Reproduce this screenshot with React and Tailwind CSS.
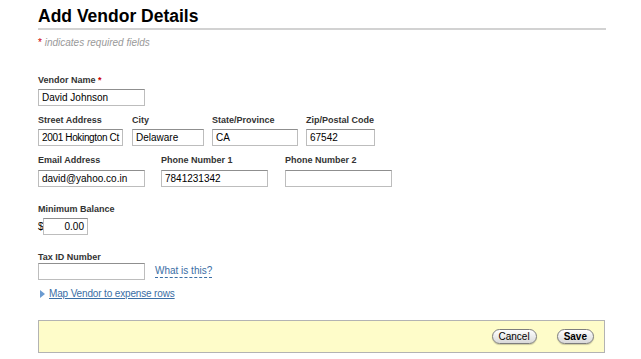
import React from 'react';

const font = { fontFamily: '"Liberation Sans", Arial, Helvetica, sans-serif' };

const Label = ({ children, required, className = '' }) => (
  <div className={`h-[12px] text-[9px] leading-[12px] font-bold text-[#333] whitespace-nowrap ${className}`}>
    {children}
    {required && <span className="text-[#cc0000]"> *</span>}
  </div>
);

const Field = ({ value = '', width, right = false, extra = '' }) => (
  <div
    className={`h-[17px] border border-[#bdbdbd] border-t-[#8f8f8f] bg-white text-[10px] leading-[15px] text-black px-[3px] whitespace-nowrap overflow-hidden ${right ? 'text-right' : ''} ${width} ${extra}`}
  >
    {value}
  </div>
);

const Pill = ({ children, bold }) => (
  <button
    className={`h-[15px] px-[6px] rounded-full border border-[#7d7d7d] bg-gradient-to-b from-white to-[#d9d9d9] text-[10px] leading-[13px] text-black shadow-[0_1px_1px_rgba(0,0,0,0.2)] ${bold ? 'font-bold' : ''}`}
  >
    {children}
  </button>
);

export default function App() {
  return (
    <div className="w-[641px] h-[359px] bg-white overflow-hidden" style={font}>
      <div className="pl-[38px] w-[606px]">
        {/* Header */}
        <h1 className="mt-[6px] text-[17.5px] leading-[20px] font-bold text-black">Add Vendor Details</h1>
        <div className="mt-[2px] h-[2px] bg-[#d2d2d2]"></div>
        <p className="mt-[7px] h-[12px] text-[10px] leading-[12px] italic text-[#999]">
          <span className="text-[#cc0000] not-italic">*</span> indicates required fields
        </p>

        {/* Vendor name */}
        <div className="mt-[25px]">
          <Label required>Vendor Name</Label>
          <div className="mt-[3px]">
            <Field value="David Johnson" width="w-[107px]" />
          </div>
        </div>

        {/* Address */}
        <div className="mt-[8px] flex">
          <div className="w-[94px]">
            <Label>Street Address</Label>
            <div className="mt-[3px]">
              <Field value="2001 Hokington Ct" width="w-[85px]" extra="px-[2px] tracking-[-0.35px]" />
            </div>
          </div>
          <div className="w-[80px]">
            <Label>City</Label>
            <div className="mt-[3px]"><Field value="Delaware" width="w-[72px]" /></div>
          </div>
          <div className="w-[94px]">
            <Label>State/Province</Label>
            <div className="mt-[3px]"><Field value="CA" width="w-[86px]" /></div>
          </div>
          <div className="w-[70px]">
            <Label>Zip/Postal Code</Label>
            <div className="mt-[3px]"><Field value="67542" width="w-[69px]" /></div>
          </div>
        </div>

        {/* Contact */}
        <div className="mt-[8px] flex">
          <div className="w-[123px]">
            <Label>Email Address</Label>
            <div className="mt-[4px]"><Field value="david@yahoo.co.in" width="w-[107px]" /></div>
          </div>
          <div className="w-[124px]">
            <Label>Phone Number 1</Label>
            <div className="mt-[4px]"><Field value="7841231342" width="w-[107px]" /></div>
          </div>
          <div className="w-[107px]">
            <Label>Phone Number 2</Label>
            <div className="mt-[4px]"><Field width="w-[107px]" /></div>
          </div>
        </div>

        {/* Minimum balance */}
        <div className="mt-[16px]">
          <Label>Minimum Balance</Label>
          <div className="mt-[3px] flex items-center">
            <span className="w-[5px] text-[10px] leading-[17px] text-black">$</span>
            <Field value="0.00" width="w-[45px]" right />
          </div>
        </div>

        {/* Tax ID */}
        <div className="mt-[16px]">
          <Label>Tax ID Number</Label>
          <div className="flex items-center">
            <Field width="w-[107px]" />
            <a className="ml-[10px] text-[10px] leading-[12px] text-[#3a6ea5] border-b border-dashed border-[#3a6ea5] cursor-pointer">
              What is this?
            </a>
          </div>
        </div>

        {/* Map link */}
        <div className="mt-[8px] h-[12px] flex items-center">
          <svg width="5" height="8" viewBox="0 0 5 8" className="ml-[2px]">
            <path d="M0 0 L5 4 L0 8 Z" fill="#6b9bd1" />
          </svg>
          <a className="ml-[4px] text-[10px] leading-[12px] tracking-[-0.15px] text-[#3a6ea5] underline cursor-pointer">
            Map Vendor to expense rows
          </a>
        </div>

        {/* Footer */}
        <div className="mt-[20px] w-[567px] h-[33px] border border-[#b3b3b3] bg-[#fefcc9] flex items-center justify-end pr-[10px] gap-[20px]">
          <Pill>Cancel</Pill>
          <Pill bold>Save</Pill>
        </div>
      </div>
    </div>
  );
}
